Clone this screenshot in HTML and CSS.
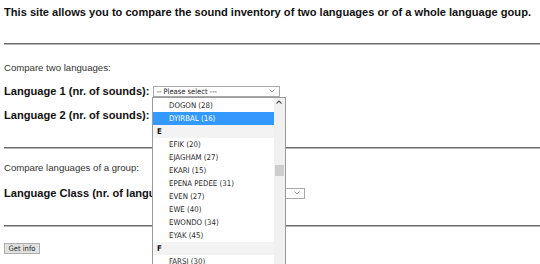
FILE: index.html
```html
<!DOCTYPE html>
<html lang="en">
<head>
  <meta charset="UTF-8">
  <meta name="viewport" content="width=device-width, initial-scale=1.0">
  <title>Sound Inventory Comparison</title>
  <link rel="stylesheet" href="styles.css">
</head>
<body>

<div class="page">
  <p class="intro">This site allows you to compare the sound inventory of two languages or of a whole language goup.</p>

  <hr class="rule rule-first">

  <p class="caption caption-first">Compare two languages:</p>

  <div class="fields">
    <div class="field">
      <span class="label">Language 1 (nr. of sounds):</span>
      <div class="combo">
        <span>-- Please select ---</span>
        <svg class="chevron" width="6" height="4" viewBox="0 0 6 4"><polyline points="0.5,0.5 3,3 5.5,0.5" fill="none" stroke="#8a8a8a" stroke-width="0.9"/></svg>
      </div>
    </div>
    <div class="field">
      <span class="label">Language 2 (nr. of sounds):</span>
      <div class="combo">
        <span>-- Please select ---</span>
        <svg class="chevron" width="6" height="4" viewBox="0 0 6 4"><polyline points="0.5,0.5 3,3 5.5,0.5" fill="none" stroke="#8a8a8a" stroke-width="0.9"/></svg>
      </div>
    </div>
  </div>

  <hr class="rule">

  <p class="caption">Compare languages of a group:</p>

  <div class="fields fields-group">
    <div class="field">
      <span class="label">Language Class (nr. of languages):</span>
      <div class="combo combo-short">
        <span>-- Please select ---</span>
        <svg class="chevron" width="6" height="4" viewBox="0 0 6 4"><polyline points="0.5,0.5 3,3 5.5,0.5" fill="none" stroke="#8a8a8a" stroke-width="0.9"/></svg>
      </div>
    </div>
  </div>

  <hr class="rule">

  <button class="btn">Get info</button>

  <!-- open list of the first select -->
  <div class="popup">
    <ul class="options">
      <li class="opt">DOGON (28)</li>
      <li class="opt selected">DYIRBAL (16)</li>
      <li class="group">E</li>
      <li class="opt">EFIK (20)</li>
      <li class="opt">EJAGHAM (27)</li>
      <li class="opt">EKARI (15)</li>
      <li class="opt">EPENA PEDEE (31)</li>
      <li class="opt">EVEN (27)</li>
      <li class="opt">EWE (40)</li>
      <li class="opt">EWONDO (34)</li>
      <li class="opt">EYAK (45)</li>
      <li class="group">F</li>
      <li class="opt">FARSI (30)</li>
    </ul>
    <div class="scrollbar">
      <svg class="up" width="6" height="4" viewBox="0 0 6 4"><polyline points="0.5,3.5 3,1 5.5,3.5" fill="none" stroke="#505050" stroke-width="1.1"/></svg>
      <div class="thumb"></div>
    </div>
  </div>
</div>

</body>
</html>
```

FILE: styles.css
```css
html, body {
  height: 100%;
}

body {
  margin: 0;
  font-family: "Liberation Sans", Arial, sans-serif;
  color: #111;
  background-color: #fff;
  overflow: hidden;
}

.page {
  position: relative;
  height: 100%;
  padding: 5px 0 0 4px;
}

.intro {
  margin: 0;
  font-size: 11.1px;
  line-height: 14px;
  font-weight: bold;
  white-space: nowrap;
}

.rule {
  height: 0;
  margin: 22px 0 0 0;
  border: 0;
  border-top: 1px solid #6a6a6a;
  border-bottom: 1px solid #b5b5b5;
}

.rule-first {
  margin-top: 24px;
}

.caption {
  margin: 13px 0 0 0;
  font-size: 9.6px;
  line-height: 12px;
  color: #333;
}

.caption-first {
  margin-top: 17px;
}

.fields {
  display: flex;
  flex-direction: column;
  gap: 4px;
  margin-top: 7px;
}

.fields-group {
  margin-top: 9px;
}

.field {
  display: flex;
  align-items: center;
  gap: 4px;
  height: 20px;
}

.label {
  font-size: 11.1px;
  font-weight: bold;
  white-space: nowrap;
}

.combo {
  display: flex;
  align-items: center;
  justify-content: space-between;
  box-sizing: border-box;
  width: 127px;
  height: 11px;
  padding: 0 4px 0 2px;
  border: 1px solid #a9a9a9;
  background-color: #fff;
  font-family: "DejaVu Sans Condensed", "DejaVu Sans", sans-serif;
  font-size: 7.5px;
  color: #222;
}

.combo-short {
  width: 113px;
}

.chevron {
  display: block;
}

.btn {
  display: block;
  margin-top: 16px;
  box-sizing: border-box;
  width: 36px;
  height: 11px;
  padding: 0;
  border: 1px solid #adadad;
  background-color: #e1e1e1;
  font-family: "DejaVu Sans Condensed", "DejaVu Sans", sans-serif;
  font-size: 7.5px;
  line-height: 9px;
  color: #222;
}

.popup {
  position: absolute;
  left: 152px;
  top: 97px;
  display: flex;
  width: 134px;
  height: 180px;
  box-sizing: border-box;
  border: 1px solid #9a9a9a;
  background-color: #fff;
}

.options {
  flex: 1;
  margin: 0;
  padding: 1px 0 0 0;
  list-style: none;
  font-family: "DejaVu Sans Condensed", "DejaVu Sans", sans-serif;
  font-size: 7.8px;
  line-height: 13px;
  color: #2a2a2a;
}

.opt {
  padding-left: 16px;
}

.group {
  padding-left: 4px;
  font-weight: bold;
  color: #111;
  background-color: #f3f3f3;
}

.selected {
  background-color: #3399ff;
  color: #fff;
}

.scrollbar {
  position: relative;
  width: 11px;
  background-color: #f0f0f0;
}

.up {
  position: absolute;
  left: 2px;
  top: 2px;
}

.thumb {
  position: absolute;
  left: 1px;
  top: 67px;
  width: 9px;
  height: 11px;
  background-color: #cdcdcd;
}
```
